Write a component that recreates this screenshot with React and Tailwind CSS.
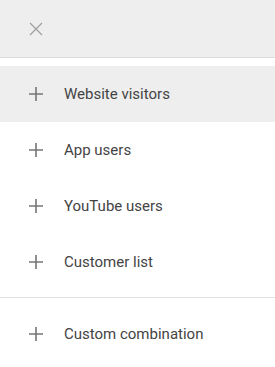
const items = ["Website visitors", "App users", "YouTube users", "Customer list"];

function PlusIcon() {
    return (
        <svg width="16" height="16" viewBox="0 0 16 16" className="shrink-0">
            <path d="M8 1v14M1 8h14" stroke="#757575" strokeWidth="1.6" fill="none" />
        </svg>
    );
}

function Row({ label, active }) {
    return (
        <div className={`flex items-center h-14 pl-7 ${active ? "bg-[#eeeeee]" : ""}`}>
            <PlusIcon />
            <span className="ml-5 text-[15px] text-[#444444]">{label}</span>
        </div>
    );
}

export default function App() {
    return (
        <div className="w-[275px] h-[367px] bg-white font-['Roboto',sans-serif] overflow-hidden">
            {/* header */}
            <div className="h-[58px] bg-[#eeeeee] border-b border-[#dcdcdc] flex items-center pl-[29px]">
                <svg width="14" height="14" viewBox="0 0 14 14">
                    <path d="M1 1l12 12M13 1L1 13" stroke="#a0a0a0" strokeWidth="1.3" fill="none" />
                </svg>
            </div>

            <div className="pt-2 pb-[7px] border-b border-[#e0e0e0]">
                {items.map((label, i) => (
                    <Row key={label} label={label} active={i === 0} />
                ))}
            </div>

            <div className="py-2">
                <Row label="Custom combination" />
            </div>
        </div>
    );
}
